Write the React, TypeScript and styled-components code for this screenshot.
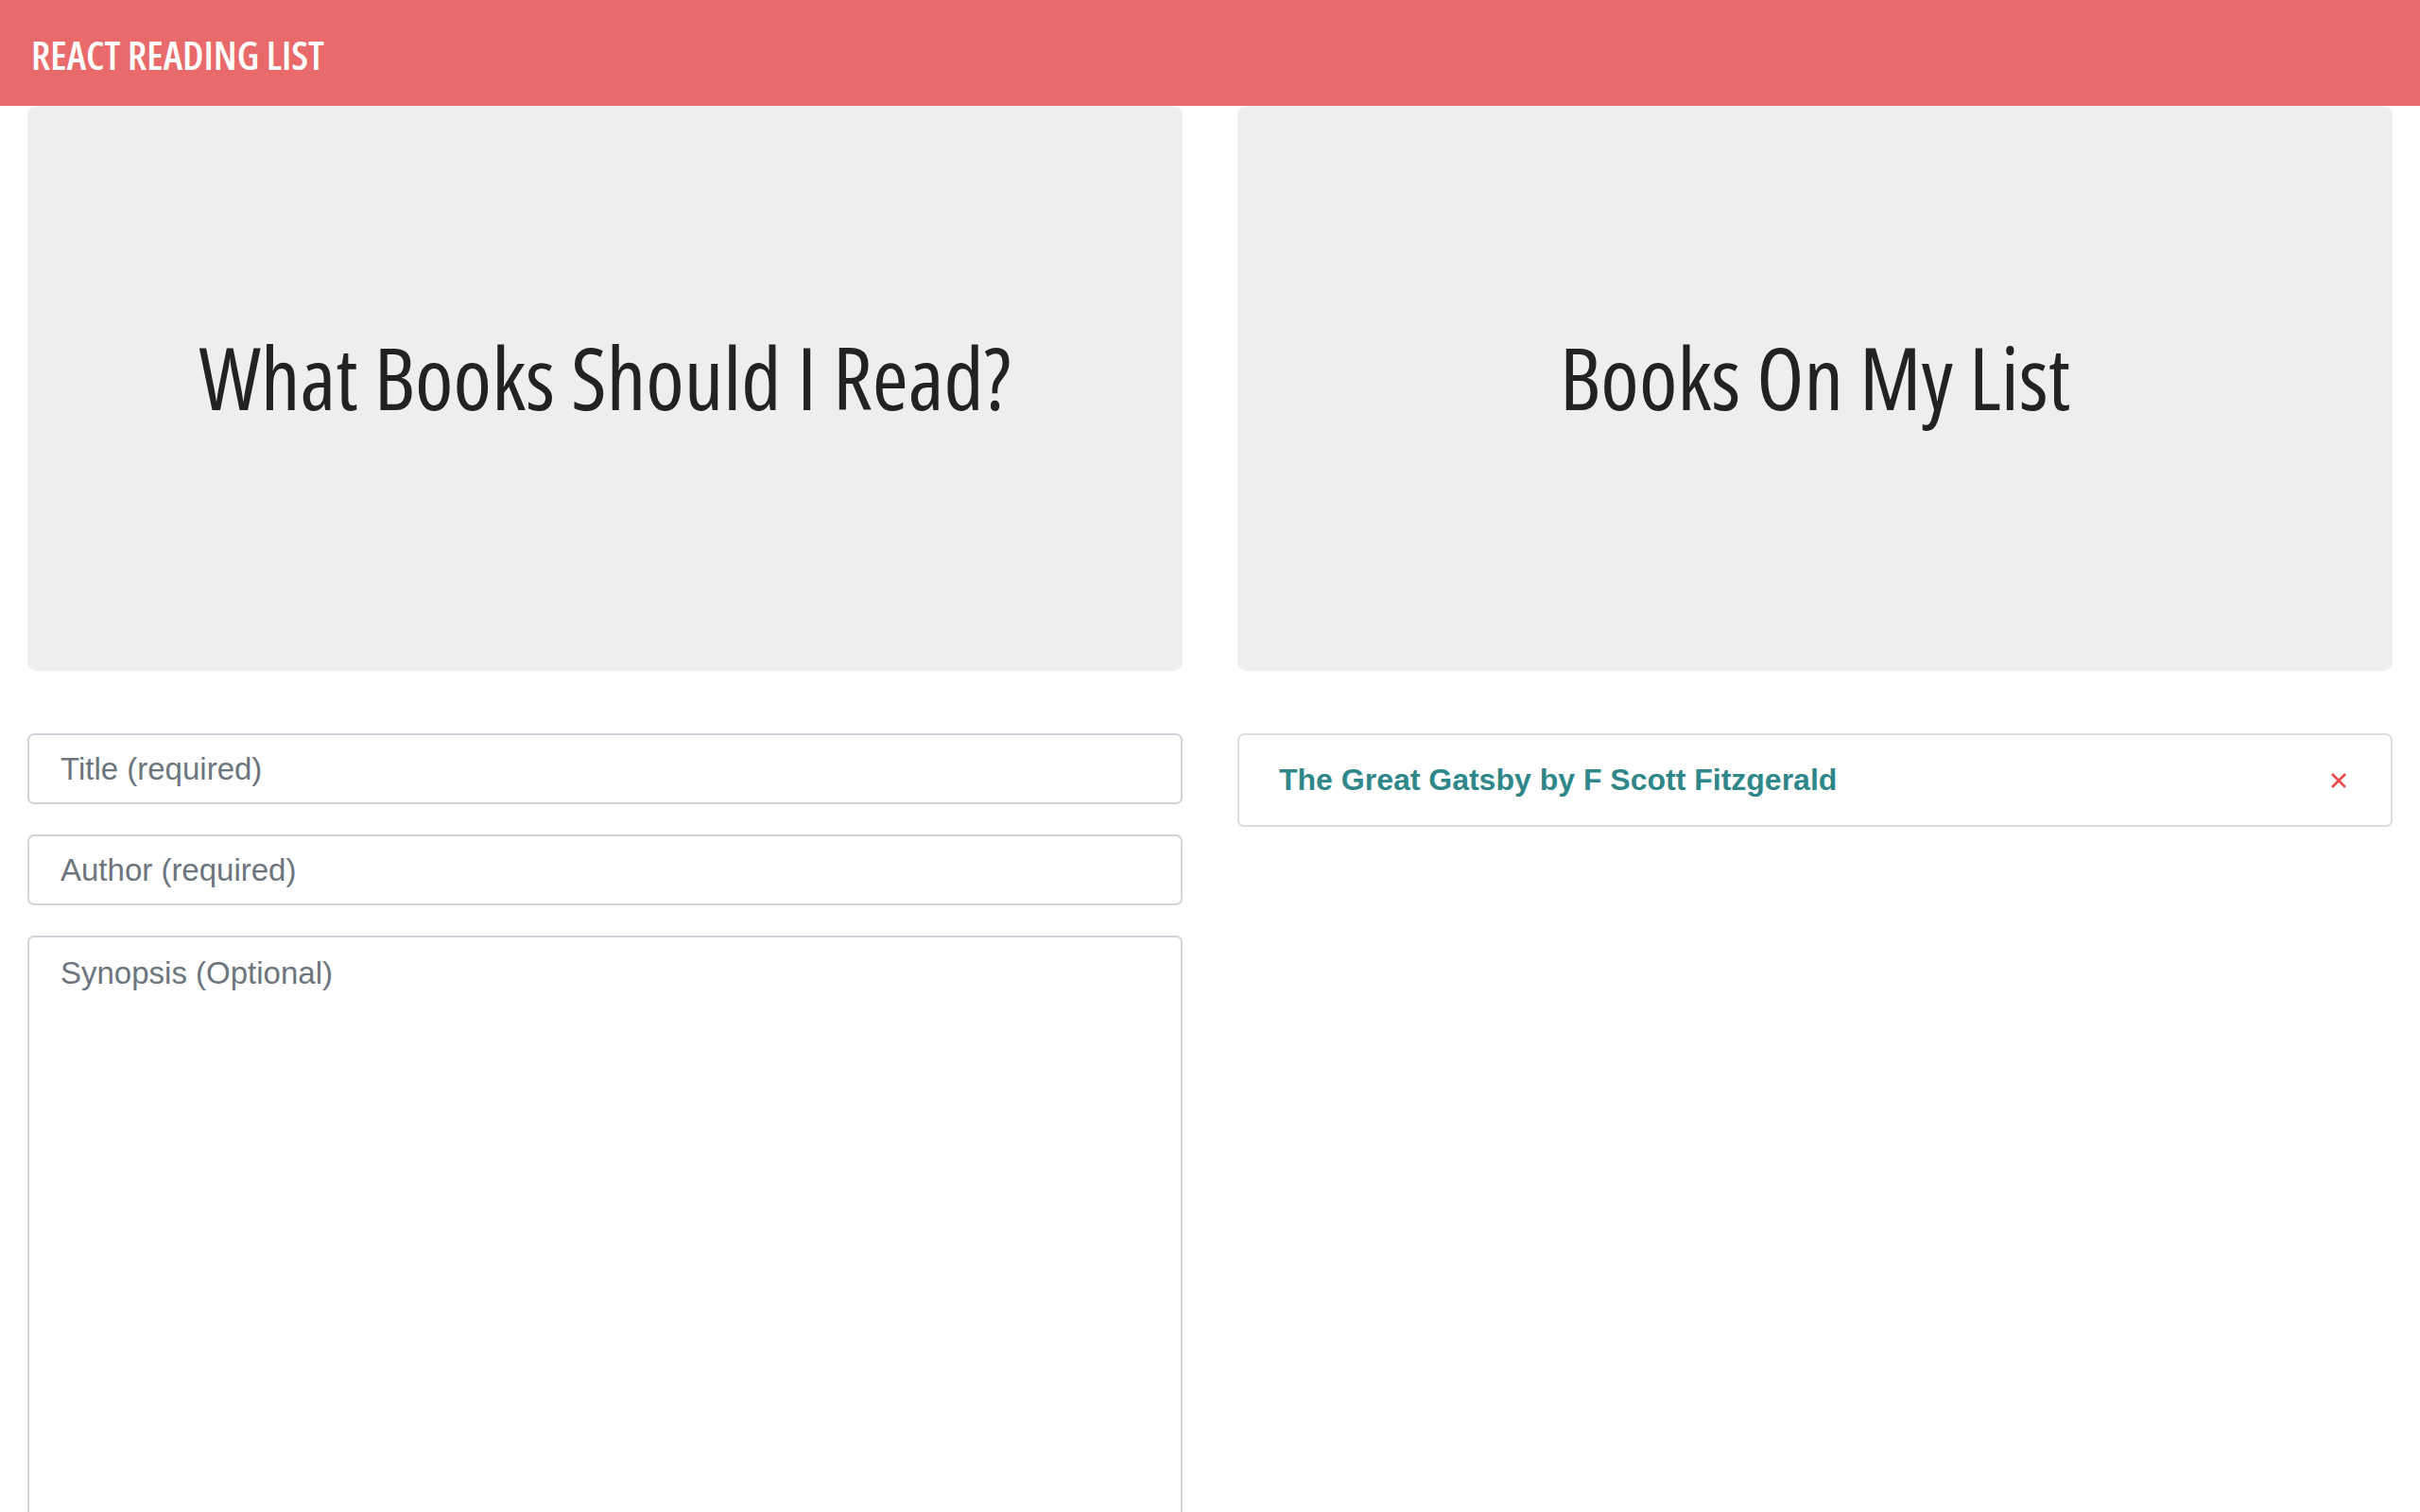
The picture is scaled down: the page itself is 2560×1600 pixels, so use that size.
import React from "react";
import styled, { createGlobalStyle } from "styled-components";

const GlobalStyle = createGlobalStyle`
  html, body { margin: 0; padding: 0; background: #ffffff; }
  body { font-family: "Liberation Sans", Arial, sans-serif; overflow: hidden; }
  * { box-sizing: border-box; }
`;

const Page = styled.div`
  width: 2560px;
  height: 1600px;
  display: flex;
  flex-direction: column;
  overflow: hidden;
`;

const NavBar = styled.header`
  height: 112px;
  flex: none;
  background: #e96a6a;
  display: flex;
  align-items: center;
  padding: 0 33px;
`;

const Brand = styled.div`
  font-family: "Open Sans", sans-serif;
  font-stretch: 75%;
  font-weight: 600;
  font-size: 42px;
  color: #ffffff;
  padding-top: 2px;
`;

const Columns = styled.main`
  display: grid;
  grid-template-columns: 1fr 1fr;
  column-gap: 58px;
  padding: 0 29px;
  align-items: start;
`;

const Column = styled.section`
  display: flex;
  flex-direction: column;
`;

const Jumbotron = styled.div`
  height: 598px;
  background: #eeeeee;
  border-radius: 10px;
  display: flex;
  align-items: center;
  justify-content: center;
  margin-bottom: 66px;
`;

const Heading = styled.h1`
  margin: 0 0 26px;
  font-family: "Open Sans", sans-serif;
  font-stretch: 75%;
  font-weight: 500;
  font-size: 92px;
  color: #222222;
`;

const Form = styled.form`
  display: flex;
  flex-direction: column;
  gap: 32px;
`;

const fieldCss = `
  width: 100%;
  border: 2px solid #ced4da;
  border-radius: 7px;
  font-family: "Liberation Sans", Arial, sans-serif;
  font-size: 33px;
  color: #495057;
  background: #ffffff;
  outline: none;
  &::placeholder { color: #6c757d; opacity: 1; }
`;

const TextInput = styled.input`
  ${fieldCss}
  height: 75px;
  padding: 0 33px;
`;

const TextArea = styled.textarea`
  ${fieldCss}
  height: 700px;
  padding: 14px 33px;
  line-height: 48px;
  resize: none;
`;

const BookList = styled.ul`
  list-style: none;
  margin: 0;
  padding: 0;
`;

const BookItem = styled.li`
  display: flex;
  align-items: center;
  justify-content: space-between;
  height: 99px;
  border: 2px solid #dddddd;
  border-radius: 7px;
  padding: 0 46px 0 42px;
`;

const BookTitle = styled.span`
  font-family: "Liberation Sans", Arial, sans-serif;
  font-weight: 700;
  font-size: 32px;
  color: #2f878a;
`;

const RemoveButton = styled.button`
  border: none;
  background: none;
  padding: 0;
  display: flex;
  cursor: pointer;
`;

export default function App() {
  return (
    <Page>
      <GlobalStyle />
      <NavBar>
        <Brand>REACT READING LIST</Brand>
      </NavBar>
      <Columns>
        <Column>
          <Jumbotron>
            <Heading>What Books Should I Read?</Heading>
          </Jumbotron>
          <Form onSubmit={(e) => e.preventDefault()}>
            <TextInput placeholder="Title (required)" />
            <TextInput placeholder="Author (required)" />
            <TextArea placeholder="Synopsis (Optional)" />
          </Form>
        </Column>
        <Column>
          <Jumbotron>
            <Heading>Books On My List</Heading>
          </Jumbotron>
          <BookList>
            <BookItem>
              <BookTitle>The Great Gatsby by F Scott Fitzgerald</BookTitle>
              <RemoveButton aria-label="Remove">
                <svg width="18" height="18" viewBox="0 0 18 18">
                  <path d="M2 2 L16 16 M16 2 L2 16" stroke="#e84a4a" strokeWidth="2.6" strokeLinecap="butt" />
                </svg>
              </RemoveButton>
            </BookItem>
          </BookList>
        </Column>
      </Columns>
    </Page>
  );
}
